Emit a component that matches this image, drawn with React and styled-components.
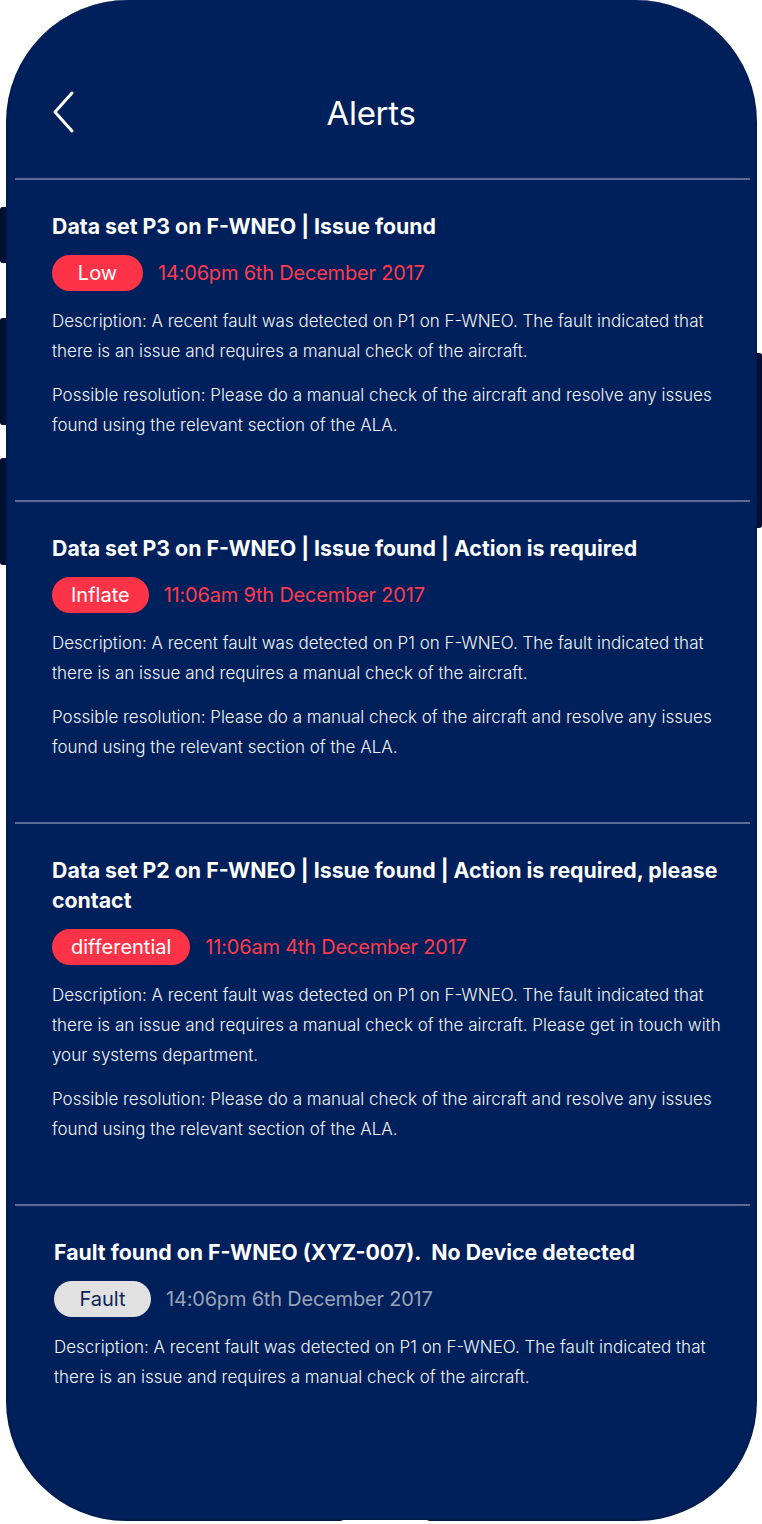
import React from 'react';
import styled, { createGlobalStyle } from 'styled-components';

const alerts = [
    {
        title: 'Data set P3 on F-WNEO | Issue found',
        tag: 'Low',
        time: '14:06pm 6th December 2017',
        tone: 'alert',
        lines: [
            'Description: A recent fault was detected on P1 on F-WNEO. The fault indicated that there is an issue and requires a manual check of the aircraft.',
            'Possible resolution: Please do a manual check of the aircraft and resolve any issues found using the relevant section of the ALA.',
        ],
    },
    {
        title: 'Data set P3 on F-WNEO | Issue found | Action is required',
        tag: 'Inflate',
        time: '11:06am 9th December 2017',
        tone: 'alert',
        lines: [
            'Description: A recent fault was detected on P1 on F-WNEO. The fault indicated that there is an issue and requires a manual check of the aircraft.',
            'Possible resolution: Please do a manual check of the aircraft and resolve any issues found using the relevant section of the ALA.',
        ],
    },
    {
        title: 'Data set P2 on F-WNEO | Issue found | Action is required, please contact',
        tag: 'differential',
        time: '11:06am 4th December 2017',
        tone: 'alert',
        lines: [
            'Description: A recent fault was detected on P1 on F-WNEO. The fault indicated that there is an issue and requires a manual check of the aircraft. Please get in touch with your systems department.',
            'Possible resolution: Please do a manual check of the aircraft and resolve any issues found using the relevant section of the ALA.',
        ],
    },
    {
        title: 'Fault found on F-WNEO (XYZ-007).\u00a0 No Device detected',
        tag: 'Fault',
        time: '14:06pm 6th December 2017',
        tone: 'fault',
        lines: [
            'Description: A recent fault was detected on P1 on F-WNEO. The fault indicated that there is an issue and requires a manual check of the aircraft.',
        ],
    },
];

export default function App() {
    return (
        <>
            <GlobalStyle />
            <Phone>
                <KeyRail $side="left">
                    <SideKey $height={56} />
                    <SideKey $height={107} $gap={55} />
                    <SideKey $height={107} $gap={33} />
                </KeyRail>
                <KeyRail $side="right">
                    <SideKey $height={175} />
                </KeyRail>
                <Screen>
                    <Header>
                        <BackButton aria-label="Back">
                            <svg width="24" height="42" viewBox="0 0 24 42" fill="none">
                                <polyline
                                    points="20,2 3,21 20,40"
                                    stroke="#ffffff"
                                    strokeWidth="3"
                                    strokeLinecap="round"
                                    strokeLinejoin="round"
                                />
                            </svg>
                        </BackButton>
                        <Title>Alerts</Title>
                    </Header>
                    <List>
                        {alerts.map((a, i) => (
                            <Card key={i} $tone={a.tone}>
                                <CardTitle>{a.title}</CardTitle>
                                <Meta>
                                    <Tag $tone={a.tone}>{a.tag}</Tag>
                                    <Time $tone={a.tone}>{a.time}</Time>
                                </Meta>
                                {a.lines.map((l, j) => (
                                    <Body key={j}>{l}</Body>
                                ))}
                            </Card>
                        ))}
                    </List>
                </Screen>
                <HomeNub />
            </Phone>
        </>
    );
}

const GlobalStyle = createGlobalStyle`
    body {
        margin: 0;
        background: #ffffff;
        font-family: Inter, "Noto Sans", sans-serif;
        -webkit-font-smoothing: antialiased;
    }
`;

const Phone = styled.div`
    position: relative;
    width: 762px;
    height: 1524px;
    overflow: hidden;
`;

// hardware keys peeking out behind the bezel edge
const KeyRail = styled.div`
    position: absolute;
    ${p => (p.$side === 'left' ? 'left: 0; top: 207px;' : 'right: 0; top: 353px;')}
    display: flex;
    flex-direction: column;
`;

const SideKey = styled.div`
    width: 10px;
    height: ${p => p.$height}px;
    margin-top: ${p => p.$gap || 0}px;
    border-radius: 3px;
    background: #001035;
    box-shadow: inset 0 0 2px rgba(0, 0, 0, 0.6);
`;

const Screen = styled.div`
    position: relative;
    margin: 0 5px 0 6px;
    height: 1521px;
    background: #00205b;
    border: 2px solid #001b50;
    border-top: none;
    border-radius: 122px 122px 120px 120px;
    box-sizing: border-box;
    overflow: hidden;
`;

const Header = styled.div`
    display: flex;
    align-items: flex-start;
    height: 180px;
    padding: 91px 84px 0 37px;
    margin: 0 5px 0 7px;
    border-bottom: 2px solid #5b6c96;
    box-sizing: border-box;
`;

const BackButton = styled.div`
    display: flex;
    flex: none;
`;

const Title = styled.h1`
    flex: 1;
    margin: 2px 0 0;
    text-align: center;
    color: #ffffff;
    font-size: 33px;
    line-height: 40px;
    font-weight: 400;
    letter-spacing: -0.3px;
`;

const List = styled.div`
    display: flex;
    flex-direction: column;
    margin: 0 5px 0 7px;
`;

const Card = styled.section`
    padding: ${p => (p.$tone === 'fault' ? '31px 20px 60px 39px' : '31px 20px 60px 37px')};
    border-bottom: 2px solid #5b6c96;

    &:last-child {
        border-bottom: none;
    }
`;

const CardTitle = styled.h2`
    margin: 0;
    max-width: 670px;
    color: #ffffff;
    font-size: 21.3px;
    line-height: 30px;
    font-weight: 700;
`;

const Meta = styled.div`
    display: flex;
    align-items: center;
    gap: 15px;
    margin: 14px 0 15px;
`;

const Tag = styled.span`
    display: inline-flex;
    align-items: center;
    justify-content: center;
    height: 36px;
    min-width: ${p => (p.$tone === 'fault' ? 97 : 91)}px;
    padding: 0 19px;
    box-sizing: border-box;
    border-radius: 18px;
    font-size: 20px;
    font-weight: 400;
    background: ${p => (p.$tone === 'fault' ? '#e1e1e1' : '#ff3347')};
    color: ${p => (p.$tone === 'fault' ? '#0d2459' : '#ffffff')};
`;

const Time = styled.span`
    font-size: 20px;
    font-weight: 400;
    letter-spacing: -0.2px;
    color: ${p => (p.$tone === 'fault' ? '#9aa3b6' : '#ff3a4c')};
`;

const Body = styled.p`
    margin: 0;
    color: #f2f4f8;
    font-size: 17px;
    font-weight: 300;
    line-height: 30px;

    & + & {
        margin-top: 14px;
    }
`;

const HomeNub = styled.div`
    position: absolute;
    left: 340px;
    bottom: 0;
    width: 90px;
    height: 4px;
    border-radius: 4px 4px 0 0;
    background: #ffffff;
`;
